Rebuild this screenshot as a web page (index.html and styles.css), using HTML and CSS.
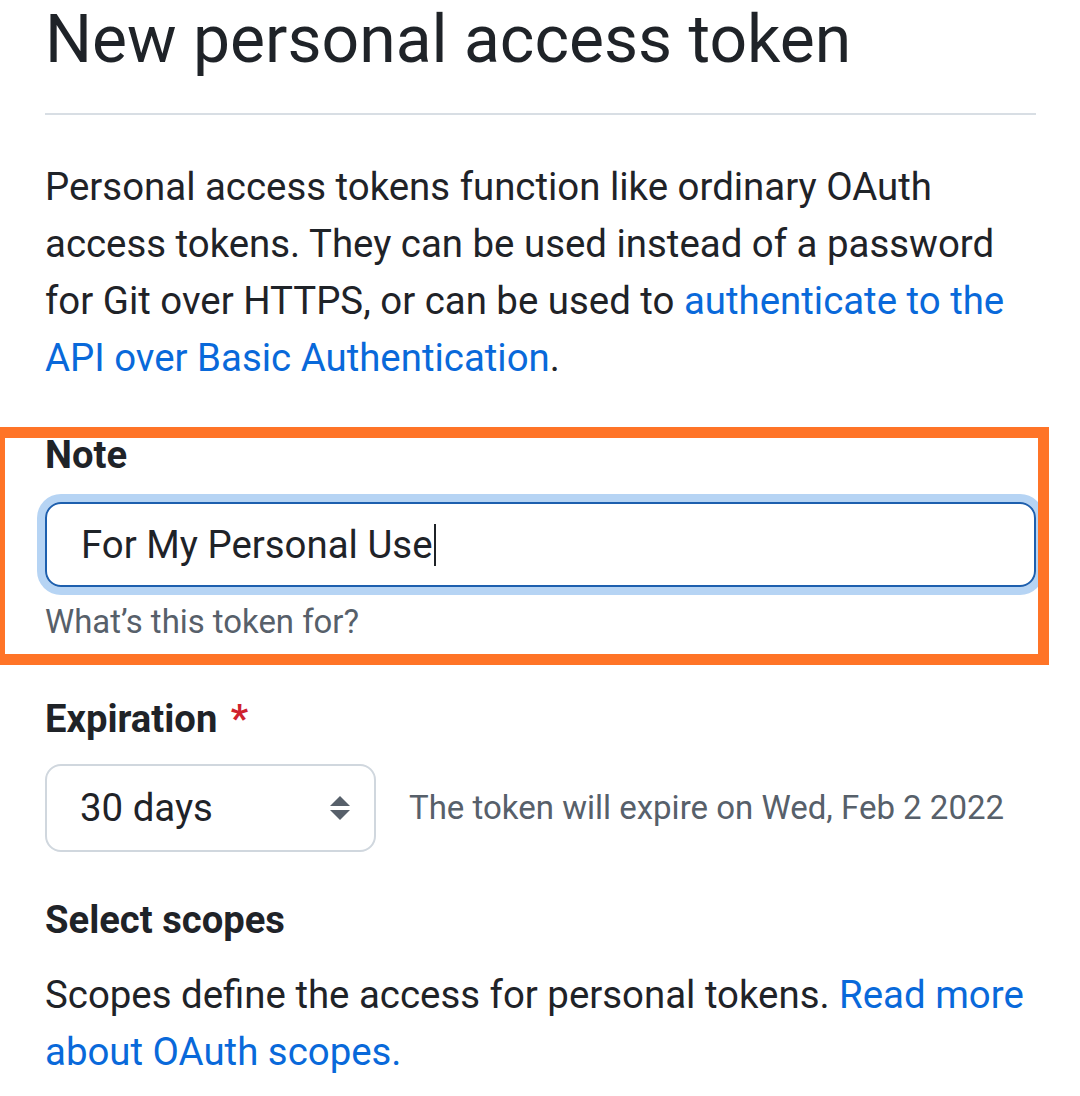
FILE: index.html
```html
<!DOCTYPE html>
<html lang="en">
<head>
<meta charset="utf-8">
<title>New personal access token</title>
<link rel="stylesheet" href="styles.css">
</head>
<body>
<main class="page">
  <h1 class="title">New personal access token</h1>
  <hr class="divider">
  <p class="lead">Personal access tokens function like ordinary OAuth access tokens. They can be used instead of a password for Git over HTTPS, or can be used to <a href="#" class="link">authenticate to the API over Basic Authentication</a>.</p>

  <div class="field field-note">
    <label class="label">Note</label>
    <div class="input"><span class="input-text">For My Personal Use</span><span class="caret"></span></div>
    <p class="hint">What’s this token for?</p>
    <div class="highlight"></div>
  </div>

  <div class="field field-exp">
    <label class="label">Expiration <span class="req">*</span></label>
    <div class="exp-row">
      <div class="select">
        <span class="select-text">30 days</span>
        <svg class="select-arrows" width="22" height="28" viewBox="0 0 22 28"><path d="M11 2 L21 12 L1 12 Z" fill="#57606a"/><path d="M1 16 L21 16 L11 26 Z" fill="#57606a"/></svg>
      </div>
      <span class="exp-note">The token will expire on Wed, Feb 2 2022</span>
    </div>
  </div>

  <h2 class="subhead">Select scopes</h2>
  <p class="lead scopes">Scopes define the access for personal tokens. <a href="#" class="link">Read more about OAuth scopes.</a></p>
</main>
</body>
</html>
```

FILE: styles.css
```css
html, body {
  margin: 0;
  padding: 0;
  background: #ffffff;
}
body {
  font-family: Roboto, "Noto Sans", "Liberation Sans", sans-serif;
  color: #1f2328;
}
.page {
  padding: 0 44px 0 45px;
}
.title {
  margin: 0;
  font-size: 66px;
  font-weight: 400;
  line-height: 80px;
  color: #1f2328;
}
.divider {
  margin: 33px 0 0 0;
  border: 0;
  height: 2px;
  background: #d8dee4;
}
.lead {
  margin: 43px 0 0 0;
  font-size: 38.4px;
  line-height: 57px;
}
.link {
  color: #0969da;
  text-decoration: none;
}
.field {
  position: relative;
}
.field-note {
  margin-top: 41px;
}
.label {
  display: block;
  font-size: 38.2px;
  line-height: 57px;
  font-weight: 700;
}
.input {
  margin-top: 18px;
  height: 85px;
  box-sizing: border-box;
  border: 2px solid #1d5fae;
  border-radius: 16px;
  box-shadow: 0 0 0 8px #b6d4f4;
  display: flex;
  align-items: center;
  padding-left: 34px;
  font-size: 38.4px;
  color: #1f2328;
}
.caret {
  display: inline-block;
  width: 2px;
  height: 42px;
  background: #1f2328;
  margin-left: 1px;
}
.hint {
  margin: 11px 0 0 0;
  font-size: 32.9px;
  line-height: 48.6px;
  color: #57606a;
}
.highlight {
  position: absolute;
  top: 0;
  left: -51px;
  right: -13px;
  height: 238px;
  box-sizing: border-box;
  border: 11px solid #ff7427;
  pointer-events: none;
}
.field-exp {
  margin-top: 44px;
}
.req {
  color: #cf222e;
  margin-left: 4px;
}
.exp-row {
  margin-top: 16px;
  display: flex;
  align-items: center;
  gap: 33px;
}
.select {
  width: 331px;
  height: 88px;
  box-sizing: border-box;
  border: 2px solid #d0d7de;
  border-radius: 16px;
  display: flex;
  align-items: center;
  justify-content: space-between;
  padding: 0 23px 0 33px;
  font-size: 38.4px;
  color: #1f2328;
}
.select-arrows {
  display: block;
}
.exp-note {
  font-size: 33px;
  color: #57606a;
}
.subhead {
  margin: 40px 0 0 0;
  font-size: 38.2px;
  line-height: 57px;
  font-weight: 700;
}
.scopes {
  margin-top: 17px;
}
```
